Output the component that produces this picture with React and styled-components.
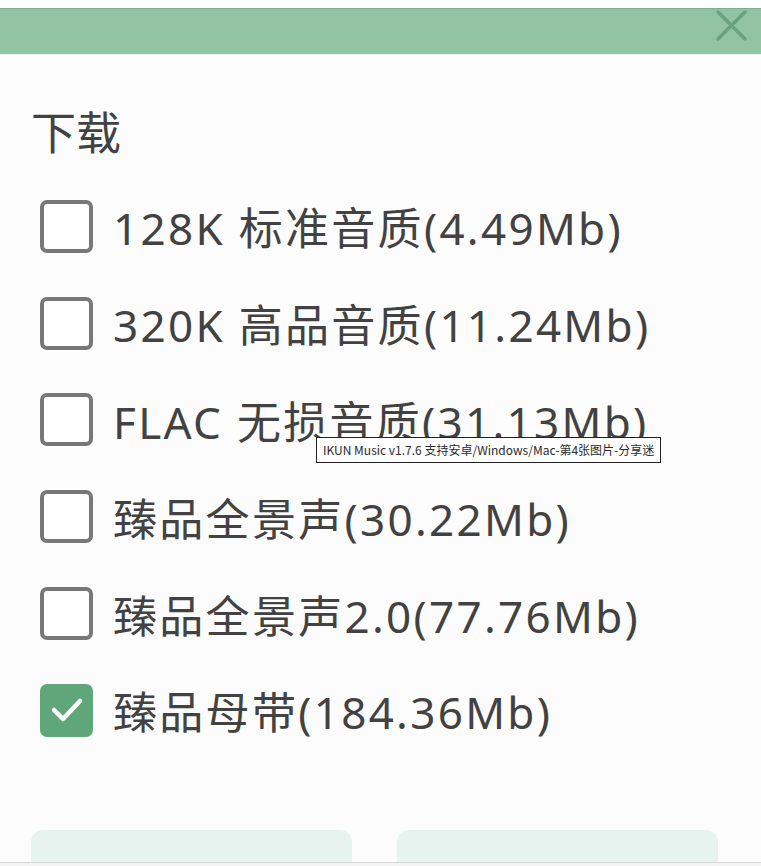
import styled, { createGlobalStyle } from "styled-components";

const GlobalStyle = createGlobalStyle`
  html, body {
    margin: 0;
    padding: 0;
    background: #fcfcfc;
  }
  * {
    box-sizing: border-box;
  }
`;

const Wrap = styled.div`
  position: relative;
  width: 761px;
  height: 866px;
  display: flex;
  flex-direction: column;
  background: #fcfcfc;
  font-family: "Noto Sans", "Noto Sans CJK SC", sans-serif;
  color: #424242;
  overflow: hidden;
`;

const TopGap = styled.div`
  height: 8px;
  background: #ffffff;
`;

const Header = styled.div`
  height: 46px;
  background: #92c4a4;
  box-shadow: inset 0 1px 0 #7fb092, 0 1px 0 #eef5f0;
  display: flex;
  justify-content: flex-end;
  align-items: flex-start;
  padding: 2px 14px 0 0;
`;

const Close = styled.button`
  width: 31px;
  height: 31px;
  padding: 0;
  border: none;
  background: none;
  display: flex;
  align-items: center;
  justify-content: center;
`;

const Content = styled.div`
  flex: 1;
  padding: 51px 0 0 33px;
`;

const Title = styled.div`
  font-size: 45px;
  line-height: 52px;
  height: 52px;
  margin-bottom: 21px;
  margin-left: -2px;
  font-family: "Noto Sans CJK SC", sans-serif;
`;

const List = styled.div`
  display: flex;
  flex-direction: column;
`;

const Row = styled.label`
  height: 96.8px;
  display: flex;
  align-items: center;
  gap: 20px;
  padding-left: 7px;
  font-size: 44px;
  letter-spacing: 2.3px;
  white-space: nowrap;
`;

const Box = styled.span`
  width: 53px;
  height: 53px;
  flex: none;
  border-radius: 7px;
  border: ${(p) => (p.checked ? "none" : "4px solid #787878")};
  background: ${(p) => (p.checked ? "#5fa77a" : "#ffffff")};
  display: flex;
  align-items: center;
  justify-content: center;
`;

const Footer = styled.div`
  display: flex;
  gap: 45px;
  padding: 0 43px 0 31px;
  height: 32px;
`;

const Button = styled.div`
  flex: 1;
  background: #e7f3ee;
  border-radius: 12px 12px 0 0;
`;

const BottomStrip = styled.div`
  height: 4px;
  background: #f3f3f3;
  border-top: 1px solid #d6d6d6;
`;

const Tooltip = styled.div`
  position: absolute;
  left: 316px;
  top: 437px;
  height: 26px;
  padding: 0 6px;
  background: #ffffff;
  border: 1px solid #222222;
  font-family: "Noto Sans CJK SC", sans-serif;
  font-size: 12px;
  line-height: 24px;
  color: #2a2a2a;
  white-space: nowrap;
`;

const options = [
  { label: "128K 标准音质(4.49Mb)" },
  { label: "320K 高品音质(11.24Mb)" },
  { label: "FLAC 无损音质(31.13Mb)" },
  { label: "臻品全景声(30.22Mb)" },
  { label: "臻品全景声2.0(77.76Mb)" },
  { label: "臻品母带(184.36Mb)", checked: true },
];

export default function App() {
  return (
    <>
      <GlobalStyle />
      <Wrap>
        <TopGap />
        <Header>
          <Close>
            <svg width="31" height="31" viewBox="0 0 31 31">
              <path
                d="M2 2 L29 29 M29 2 L2 29"
                stroke="#6aa27e"
                strokeWidth="3.4"
                strokeLinecap="round"
              />
            </svg>
          </Close>
        </Header>
        <Content>
          <Title>下载</Title>
          <List>
            {options.map((o) => (
              <Row key={o.label}>
                <Box checked={o.checked}>
                  {o.checked && (
                    <svg width="36" height="36" viewBox="0 0 36 36">
                      <path
                        d="M5 18 L14 27 L31 9"
                        fill="none"
                        stroke="#ffffff"
                        strokeWidth="4.5"
                        strokeLinecap="round"
                        strokeLinejoin="round"
                      />
                    </svg>
                  )}
                </Box>
                {o.label}
              </Row>
            ))}
          </List>
        </Content>
        <Footer>
          <Button />
          <Button />
        </Footer>
        <BottomStrip />
        <Tooltip>IKUN Music v1.7.6 支持安卓/Windows/Mac-第4张图片-分享迷</Tooltip>
      </Wrap>
    </>
  );
}
